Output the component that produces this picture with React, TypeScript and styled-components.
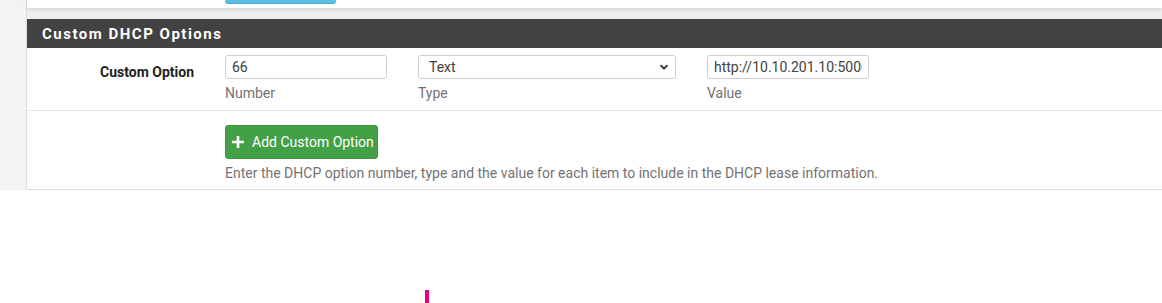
import React from 'react'
import styled, { createGlobalStyle } from 'styled-components'

const GlobalStyle = createGlobalStyle`
  html, body {
    margin: 0;
    padding: 0;
    background: #fff;
  }
  body {
    font-family: Roboto, "Liberation Sans", sans-serif;
    color: #212121;
  }
`

const App: React.FC = () => {
  return (
    <>
      <GlobalStyle />
      <Page>
        <Sidebar />
        <Main>
          <PrevPanel>
            <SaveButton />
          </PrevPanel>
          <Panel>
            <PanelHeading>Custom DHCP Options</PanelHeading>
            <FormRow>
              <Label>Custom Option</Label>
              <Fields>
                <Field $width={162}>
                  <Input defaultValue='66' />
                  <Help>Number</Help>
                </Field>
                <Field $width={258}>
                  <SelectBox>
                    <span>Text</span>
                    <Chevron viewBox='0 0 10 10'>
                      <path d='M1.5 3.2 L5 6.7 L8.5 3.2' />
                    </Chevron>
                  </SelectBox>
                  <Help>Type</Help>
                </Field>
                <Field $width={162}>
                  <Input defaultValue='http://10.10.201.10:5000' />
                  <Help>Value</Help>
                </Field>
              </Fields>
            </FormRow>
            <FormRow $last>
              <Label />
              <Fields $column>
                <AddButton>
                  <PlusIcon viewBox='0 0 14 14'>
                    <path d='M7 1 V13 M1 7 H13' />
                  </PlusIcon>
                  Add Custom Option
                </AddButton>
                <HelpText>
                  Enter the DHCP option number, type and the value for each item to include in the DHCP lease
                  information.
                </HelpText>
              </Fields>
            </FormRow>
          </Panel>
        </Main>
      </Page>
      <CursorMark />
    </>
  )
}

const Page = styled.div`
  display: flex;
  width: 1162px;
  height: 190px;
`
const Sidebar = styled.div`
  width: 26px;
  flex: none;
  background: #f3f3f3;
  border-right: 1px solid #dcdcdc;
`
const Main = styled.div`
  flex: 1;
  display: flex;
  flex-direction: column;
  background: #efefef;
`
const PrevPanel = styled.div`
  height: 8px;
  background: #fff;
  box-shadow: 0 2px 4px rgba(0, 0, 0, 0.1);
  padding-left: 198px;
  margin-bottom: 11px;
`
const SaveButton = styled.div`
  width: 111px;
  height: 3px;
  background: #5bc0de;
  border-bottom: 1px solid #46aed0;
  border-radius: 0 0 3px 3px;
`
const Panel = styled.div`
  flex: 1;
  background: #fff;
  border-bottom: 1px solid #dcdcdc;
  display: flex;
  flex-direction: column;
`
const PanelHeading = styled.div`
  height: 29px;
  background: #424242;
  color: #fff;
  font-weight: 700;
  font-size: 15px;
  letter-spacing: 1.5px;
  padding-left: 15px;
  display: flex;
  align-items: center;
  box-sizing: border-box;
  padding-top: 1px;
`
const FormRow = styled.div<{ $last?: boolean }>`
  display: flex;
  padding: ${(p) => (p.$last ? '14px 0 0' : '7px 0 0')};
  height: ${(p) => (p.$last ? '64px' : '55px')};
  border-bottom: ${(p) => (p.$last ? 'none' : '1px solid #e4e4e4')};
  flex: none;
`
const Label = styled.div`
  width: 167px;
  flex: none;
  text-align: right;
  font-weight: 700;
  font-size: 14px;
  color: #212121;
  padding-top: 9px;
`
const Fields = styled.div<{ $column?: boolean }>`
  display: flex;
  flex-direction: ${(p) => (p.$column ? 'column' : 'row')};
  align-items: flex-start;
  gap: ${(p) => (p.$column ? '0' : '31px')};
  margin-left: 31px;
`
const Field = styled.div<{ $width: number }>`
  width: ${(p) => p.$width}px;
  display: flex;
  flex-direction: column;
`
const Input = styled.input`
  box-sizing: border-box;
  width: 100%;
  height: 24px;
  border: 1px solid #cfcfcf;
  border-radius: 3px;
  padding: 0 6px;
  font-family: Roboto, "Liberation Sans", sans-serif;
  font-size: 14px;
  color: #424242;
  outline: none;
`
const SelectBox = styled.div`
  box-sizing: border-box;
  width: 100%;
  height: 24px;
  border: 1px solid #cfcfcf;
  border-radius: 3px;
  padding: 0 6px 0 10px;
  font-size: 14px;
  color: #424242;
  display: flex;
  align-items: center;
  justify-content: space-between;
`
const Chevron = styled.svg`
  width: 10px;
  height: 10px;
  fill: none;
  stroke: #333;
  stroke-width: 1.8;
`
const Help = styled.div`
  font-size: 14px;
  color: #737373;
  margin-top: 6px;
`
const AddButton = styled.button`
  display: flex;
  align-items: center;
  gap: 7px;
  height: 34px;
  width: 153px;
  padding: 0 5px;
  background: #43a047;
  border: 1px solid #3d9441;
  border-radius: 3px;
  color: #fff;
  font-family: Roboto, "Liberation Sans", sans-serif;
  font-size: 14px;
  cursor: pointer;
  white-space: nowrap;
`
const PlusIcon = styled.svg`
  width: 14px;
  height: 14px;
  flex: none;
  fill: none;
  stroke: #fff;
  stroke-width: 2.6;
`
const HelpText = styled.div`
  font-size: 14px;
  color: #737373;
  margin-top: 6px;
`
const CursorMark = styled.div`
  position: absolute;
  left: 425px;
  top: 290px;
  width: 4px;
  height: 13px;
  background: #e6007e;
`

export default App
